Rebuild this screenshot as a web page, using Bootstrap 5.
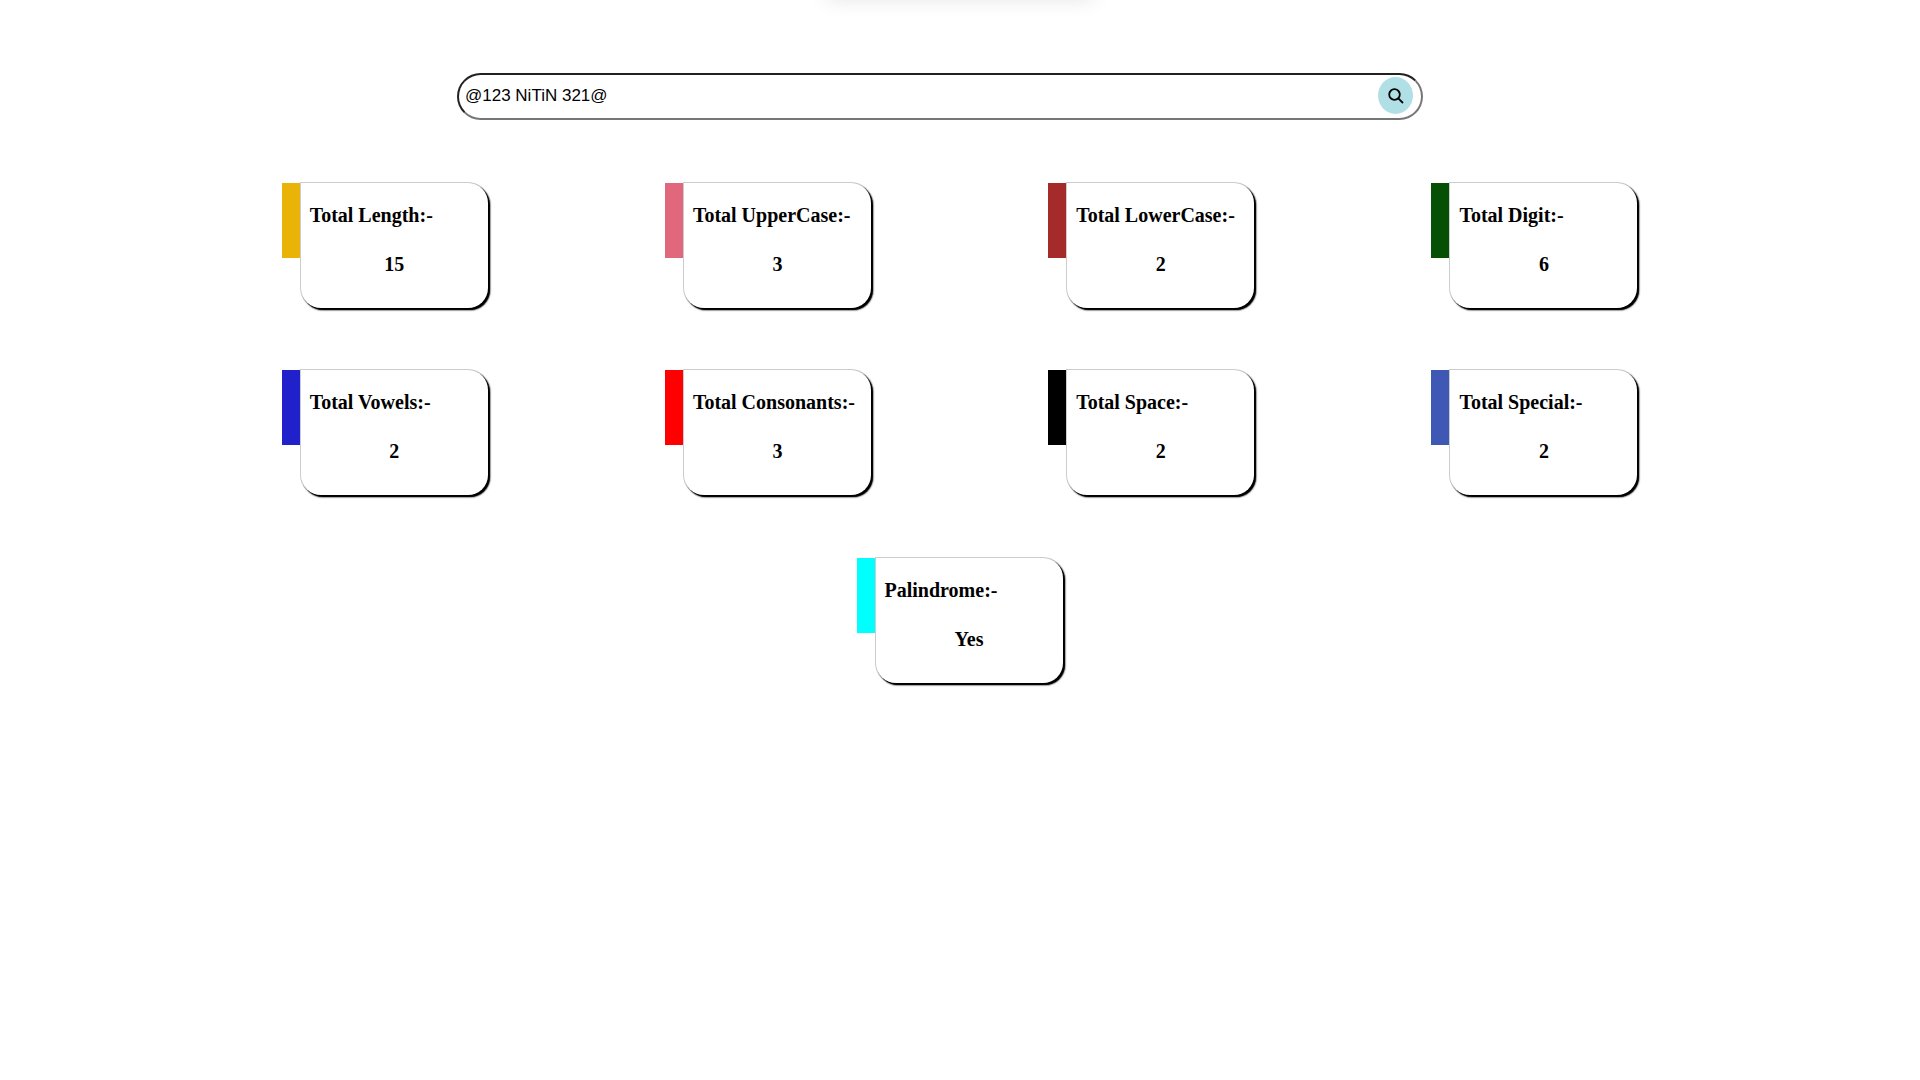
<!DOCTYPE html>
<html lang="en">
<head>
<meta charset="utf-8">
<meta name="viewport" content="width=device-width, initial-scale=1">
<title>String Analyser</title>
<link href="https://cdn.jsdelivr.net/npm/bootstrap@5.3.0/dist/css/bootstrap.min.css" rel="stylesheet">
<style>
  body { background: #fff; color: #000; font-family: "Liberation Serif", "Times New Roman", serif; }
  .toast-edge { top: -58px; width: 266px; height: 50px; box-shadow: 0 8px 20px rgba(0, 0, 0, .1); }
  .search-area { padding-top: 73px; padding-right: 40px; margin-bottom: 63px; }
  .search-pill { width: 966px; max-width: 100%; height: 47px; padding: 0 8px 2px 2px; border: 2px inset #767676; border-radius: 24px; }
  .search-text { min-width: 0; border: 0; padding: 2px 4px; outline: 0; background: transparent; color: #000; font: 17px/24px "Liberation Sans", Arial, sans-serif; }
  .search-btn { width: 35px; height: 37px; border: 0; border-radius: 50%; background: #b0e0e6; }
  .stats { padding: 0 194px 40px 193px; }
  .stats-row { margin-bottom: 62px; }
  .stats-last { margin-top: 63px; }
  .stat-bar { width: 19px; height: 75px; }
  .stat-box { width: 187px; min-height: 125px; padding: 20px 9px; border-radius: 0 20px 20px 20px; background: #fff; box-shadow: 2px 2px 1px #000, 2px 2px 2px #000, 0 0 0 1px #ccc; }
  .stat-box h2, .stat-box p { margin: 0; font-size: 20px; line-height: 24px; font-weight: 700; white-space: nowrap; }
  .stat-box p { margin-top: 25px; text-align: center; }
  .gold { background: #eab308; } .rose { background: #e1677d; } .brick { background: #a52a2a; } .forest { background: #065006; }
  .royal { background: #2121cc; } .scarlet { background: #f00; } .ink { background: #000; } .steel { background: #3f58b5; } .aqua { background: #0ff; }
</style>
</head>
<body>
<div class="toast-edge position-absolute start-50 translate-middle-x" aria-hidden="true"></div>

<form class="search-area d-flex justify-content-center" onsubmit="return false">
  <div class="search-pill d-flex align-items-center">
    <input class="search-text flex-grow-1" type="text" value="@123 NiTiN 321@" aria-label="Text">
    <button class="search-btn d-flex align-items-center justify-content-center p-0 flex-shrink-0" type="submit" aria-label="Analyse">
      <svg width="16" height="16" viewBox="0 0 16 16" fill="none" stroke="#000" stroke-width="1.8"><circle cx="6.5" cy="6.5" r="5.3"/><path d="M10.3 10.3 15 15"/></svg>
    </button>
  </div>
</form>

<main class="stats">
  <div class="stats-row d-flex flex-wrap justify-content-around">
    <section class="d-flex"><div class="stat-bar gold"></div><div class="stat-box"><h2>Total Length:-</h2><p>15</p></div></section>
    <section class="d-flex"><div class="stat-bar rose"></div><div class="stat-box"><h2>Total UpperCase:-</h2><p>3</p></div></section>
    <section class="d-flex"><div class="stat-bar brick"></div><div class="stat-box"><h2>Total LowerCase:-</h2><p>2</p></div></section>
    <section class="d-flex"><div class="stat-bar forest"></div><div class="stat-box"><h2>Total Digit:-</h2><p>6</p></div></section>
  </div>
  <div class="stats-row d-flex flex-wrap justify-content-around">
    <section class="d-flex"><div class="stat-bar royal"></div><div class="stat-box"><h2>Total Vowels:-</h2><p>2</p></div></section>
    <section class="d-flex"><div class="stat-bar scarlet"></div><div class="stat-box"><h2>Total Consonants:-</h2><p>3</p></div></section>
    <section class="d-flex"><div class="stat-bar ink"></div><div class="stat-box"><h2>Total Space:-</h2><p>2</p></div></section>
    <section class="d-flex"><div class="stat-bar steel"></div><div class="stat-box"><h2>Total Special:-</h2><p>2</p></div></section>
  </div>
  <div class="stats-last d-flex flex-wrap justify-content-around">
    <section class="d-flex"><div class="stat-bar aqua"></div><div class="stat-box"><h2>Palindrome:-</h2><p>Yes</p></div></section>
  </div>
</main>
<script src="https://cdn.jsdelivr.net/npm/bootstrap@5.3.0/dist/js/bootstrap.bundle.min.js"></script>
</body>
</html>
